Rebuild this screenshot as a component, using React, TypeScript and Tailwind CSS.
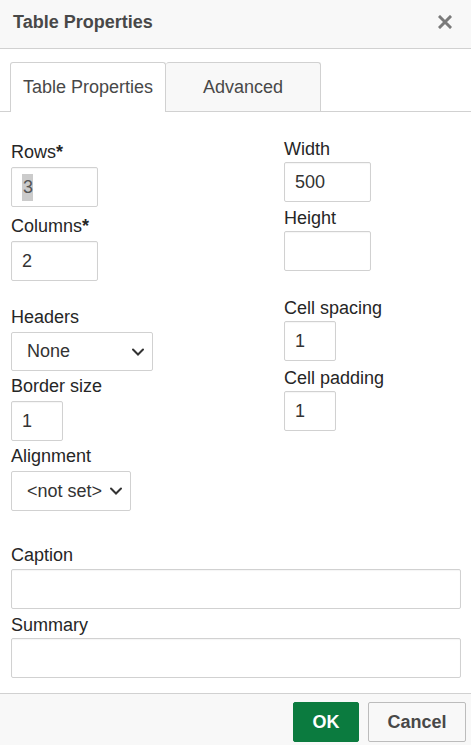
import React from 'react';

const FONT = "font-[family-name:'Liberation_Sans',Arial,sans-serif]";

const Label = ({ children, className = '' }: { children: React.ReactNode; className?: string }) => (
  <div className={`h-5 text-[18px] leading-5 text-[#262626] whitespace-nowrap ${className}`}>{children}</div>
);

const Req = () => <span className="font-bold">*</span>;

const Box = ({ w, value, className = '' }: { w: string; value?: React.ReactNode; className?: string }) => (
  <div
    className={`${w} h-10 border border-[#d1d1d1] rounded-[2px] bg-white pl-[10px] flex items-center text-[18px] text-[#333] shadow-[inset_0_1px_1px_rgba(0,0,0,0.04)] ${className}`}
  >
    {value}
  </div>
);

const Chevron = () => (
  <svg width="14" height="9" viewBox="0 0 14 9" className="pointer-events-none absolute right-[7px] top-1/2 -translate-y-1/2">
    <path d="M2 2 L7 7 L12 2" fill="none" stroke="#333" strokeWidth="2" strokeLinecap="round" />
  </svg>
);

const Select = ({ w, h, text }: { w: string; h: string; text: string }) => (
  <div className={`relative ${w} ${h} border border-[#d1d1d1] rounded-[2px] bg-white flex items-center pl-[15px] text-[18px] text-[#333]`}>
    <span>{text}</span>
    <Chevron />
  </div>
);

export default function App() {
  return (
    <div className={`w-[471px] h-[745px] bg-white flex flex-col overflow-hidden ${FONT}`}>
      {/* HEADER */}
      <header className="h-[49px] shrink-0 bg-[#f8f8f8] border-b border-[#d1d1d1] flex items-center justify-between pl-[13px] pr-[19px]">
        <h1 className="text-[18px] font-bold text-[#484848] leading-none -mt-[5px]">Table Properties</h1>
        <svg width="14" height="14" viewBox="0 0 14 14" className="-mt-[5px]">
          <path d="M2 2 L12 12 M12 2 L2 12" stroke="#7a7a7a" strokeWidth="3" strokeLinecap="square" />
        </svg>
      </header>

      {/* TABS */}
      <div className="mt-[13px] flex pl-[10px] border-b border-[#d1d1d1] h-[50px] shrink-0">
        <div className="w-[156px] h-[50px] -mb-px bg-white border border-b-0 border-[#d1d1d1] rounded-t-[3px] flex items-center justify-center text-[18px] text-[#484848]">
          Table Properties
        </div>
        <div className="w-[155px] h-[49px] bg-[#f8f8f8] border border-l-0 border-b-0 border-[#d1d1d1] rounded-t-[3px] flex items-center justify-center text-[18px] text-[#484848]">
          Advanced
        </div>
      </div>

      {/* BODY */}
      <div className="flex-1 px-[11px]">
        <div className="flex">
          <div className="w-[273px] flex flex-col pt-[30px]">
            <Label>Rows<Req /></Label>
            <Box w="w-[87px]" className="mt-[5px]" value={<span className="bg-[#cbcbcb] text-[#555] pl-[1px]">3</span>} />
            <Label className="mt-[9px]">Columns<Req /></Label>
            <Box w="w-[87px]" className="mt-[5px]" value="2" />
            <Label className="mt-[26px]">Headers</Label>
            <div className="mt-[5px]">
              <Select w="w-[142px]" h="h-[39px]" text="None" />
            </div>
            <Label className="mt-[5px]">Border size</Label>
            <Box w="w-[52px]" className="mt-[5px]" value="1" />
            <Label className="mt-[5px]">Alignment</Label>
            <div className="mt-[5px]">
              <Select w="w-[120px]" h="h-10" text="<not set>" />
            </div>
          </div>
          <div className="flex flex-col pt-[27px]">
            <Label>Width</Label>
            <Box w="w-[87px]" className="mt-[3px]" value="500" />
            <Label className="mt-[6px]">Height</Label>
            <Box w="w-[87px]" className="mt-[3px]" />
            <Label className="mt-[27px]">Cell spacing</Label>
            <Box w="w-[52px]" className="mt-[3px]" value="1" />
            <Label className="mt-[7px]">Cell padding</Label>
            <Box w="w-[52px]" className="mt-[3px]" value="1" />
          </div>
        </div>

        <div className="flex flex-col mt-[34px]">
          <Label>Caption</Label>
          <Box w="w-[450px]" className="mt-1" />
          <Label className="mt-[6px]">Summary</Label>
          <Box w="w-[450px]" className="mt-[3px]" />
        </div>
      </div>

      {/* FOOTER */}
      <footer className="h-[52px] shrink-0 bg-[#f8f8f8] border-t border-[#d1d1d1] flex items-start justify-end gap-[9px] pt-[8px] pr-[5px]">
        <button className="w-[66px] h-10 rounded-[2px] bg-[#0b7b3f] border border-[#0b7b3f] text-white text-[18px] font-bold">
          OK
        </button>
        <button className="w-[98px] h-10 rounded-[2px] bg-[#f8f8f8] border border-[#bcbcbc] text-[#484848] text-[18px] font-bold">
          Cancel
        </button>
      </footer>
    </div>
  );
}
